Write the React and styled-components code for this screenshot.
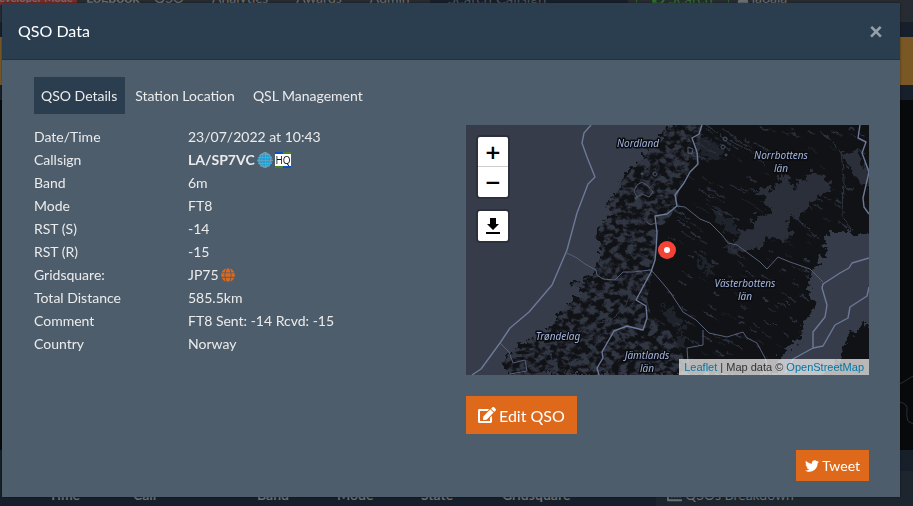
import React, { useState } from "react";
import styled, { createGlobalStyle } from "styled-components";
import { FaChartBar, FaEdit, FaGlobe, FaSyncAlt, FaTwitter, FaUser } from "react-icons/fa";

const GlobalStyle = createGlobalStyle`
  * {
    box-sizing: border-box;
  }
  body {
    margin: 0;
    background: #17202a;
    color: #ebebeb;
    font-family: Lato, "Liberation Sans", sans-serif;
    font-size: 14px;
    line-height: 22px;
  }
  button, input {
    font-family: inherit;
  }
`;

/* ---------- logbook page behind the dialog ---------- */

const Page = styled.div`
  height: 100vh;
  overflow: hidden;
  color: #6b6f74;
`;

const Navbar = styled.nav`
  display: flex;
  align-items: center;
  height: 48px;
  margin-top: -26px;
  background: #262c31;
  white-space: nowrap;

  a {
    color: inherit;
    text-decoration: none;
    margin-right: 28px;
  }
`;

const DevBadge = styled.span`
  width: 77px;
  margin-right: 9px;
  padding-right: 4px;
  background: #7a2b28;
  font-size: 11px;
  font-weight: 700;
  line-height: 14px;
  display: flex;
  justify-content: flex-end;
  overflow: hidden;
`;

const Brand = styled.a`
  width: 40px;
  color: #808488;
  font-weight: 700;
`;

const SearchInput = styled.input`
  width: 198px;
  height: 38px;
  margin-left: -8px;
  margin-right: 8px;
  padding: 0 18px;
  border: 0;
  background: #17202a;
  color: #6b6f74;
  font-size: 15px;

  &::placeholder {
    color: #4b535c;
  }
`;

const SearchButton = styled.button`
  display: flex;
  align-items: center;
  justify-content: center;
  gap: 4px;
  width: 93px;
  height: 38px;
  margin-right: 8px;
  border: 1px solid #2c5a2c;
  background: none;
  color: #2f6b2f;
  font-size: 15px;
`;

const UserName = styled.span`
  display: flex;
  align-items: center;
  gap: 3px;
`;

const Alert = styled.div`
  height: 48px;
  margin: 15px 0;
  background: #7a5826;
`;

const WorldMap = styled.div`
  display: flex;
  justify-content: flex-end;
  height: 350px;
  background: #08090a;
`;

const LogColumns = styled.div`
  display: grid;
  grid-template-columns: 656px 1fr;
  padding-top: 21px;
`;

const LogTable = styled.table`
  width: 600px;
  margin-left: 40px;
  border-collapse: collapse;
  table-layout: fixed;

  th {
    height: 48px;
    padding: 0 9px;
    text-align: left;
  }
`;

const Breakdown = styled.div`
  display: flex;
  align-items: center;
  gap: 3px;
  height: 48px;
  padding-left: 11px;
  background: #1d262f;
`;

/* ---------- dialog ---------- */

const Backdrop = styled.div`
  position: fixed;
  inset: 0;
  padding: 3px 13px 9px 2px;
`;

const Modal = styled.div`
  background: #4e5d6c;
  box-shadow: 0 0 2px rgba(0, 0, 0, 0.5);
`;

const ModalHeader = styled.div`
  display: flex;
  align-items: center;
  justify-content: space-between;
  height: 57px;
  padding: 0 17px 0 16px;
  background: #2b3e50;
  border-bottom: 1px solid #24323f;
`;

const ModalTitle = styled.h5`
  margin: 0;
  color: #fff;
  font-size: 16px;
  font-weight: 400;
`;

const CloseButton = styled.button`
  padding: 0;
  border: 0;
  background: none;
  color: #95a0aa;
  font-size: 24px;
  font-weight: 900;
  line-height: 24px;
`;

const ModalBody = styled.div`
  padding: 17px 31px 16px 32px;
`;

const Tabs = styled.div`
  display: flex;
  gap: 3px;
  margin-bottom: 11px;
`;

const Tab = styled.button`
  height: 37px;
  padding: 0 8px 0 7px;
  border: 0;
  background: ${(props) => (props.$active ? "#2b3e50" : "none")};
  color: #ebebeb;
  font-size: 14px;
`;

const Columns = styled.div`
  display: grid;
  grid-template-columns: 1fr 1fr;
  gap: 29px;
`;

const DetailsTable = styled.table`
  width: 100%;
  height: max-content;
  border-collapse: collapse;

  th,
  td {
    height: 23px;
    padding: 1px 0 0;
    text-align: left;
    font-weight: 400;
  }
  th {
    width: 154px;
  }
`;

const Value = styled.div`
  display: flex;
  align-items: center;
  gap: 2px;

  a {
    display: flex;
    color: #df691a;
  }
`;

const MapBox = styled.div`
  position: relative;
  height: 250px;
  overflow: hidden;
  background: #363c49;

  > svg {
    display: block;
  }
`;

const MapControls = styled.div`
  position: absolute;
  top: 10px;
  left: 10px;
  display: grid;
  gap: 10px;
`;

const MapBar = styled.div`
  width: 34px;
  border: 2px solid rgba(0, 0, 0, 0.2);
  border-radius: 4px;
  overflow: hidden;
`;

const MapButton = styled.button`
  display: flex;
  align-items: center;
  justify-content: center;
  width: 30px;
  height: 30px;
  padding: 0;
  border: 0;
  background: #fff;
  color: #000;
  font-family: "DejaVu Sans", sans-serif;
  font-size: 20px;
  font-weight: 700;
  line-height: 28px;

  &:not(:last-child) {
    border-bottom: 1px solid #ccc;
  }
`;

const Attribution = styled.div`
  position: absolute;
  right: 0;
  bottom: 0;
  padding: 0 5px;
  background: rgba(255, 255, 255, 0.7);
  color: #333;
  font: 11px/16px "Liberation Sans", sans-serif;

  a {
    color: #0078a8;
    text-decoration: none;
  }
`;

const ActionButton = styled.button`
  display: flex;
  align-items: center;
  gap: 3px;
  height: ${(props) => (props.$small ? "31px" : "38px")};
  padding: ${(props) => (props.$small ? "0 9px" : "0 12px")};
  border: 0;
  background: #df691a;
  color: #fff;
  font-size: ${(props) => (props.$small ? "14px" : "16px")};
`;

const Actions = styled.div`
  display: flex;
  justify-content: ${(props) => (props.$right ? "flex-end" : "flex-start")};
  margin-top: ${(props) => (props.$right ? "16px" : "21px")};
`;

const WEST = "M204 0 197 8 190 18 181 28 172 37 167 42 160 52 154 58 150 68 141 78 146 88 135 100 128 112 137 125 132 137 127 150 116 154 104 160 120 164 108 176 94 187 89 198 84 203 77 218 66 213 51 222 37 237 44 250";
const LAND = WEST + "H314L309 238 318 227 331 217 337 200 349 182 342 163 344 150 361 127 358 118 363 108H410V-9H204Z";
const NORWAY = WEST + "H222L215 225 200 200 185 190 181 175 189 135 191 108 206 89 215 60 232 39 236 0Z";

const GREY_AREAS = [
  "M286 65 311 62 314 48 324 56 331 62 347 45 355 50 366 63 347 77 332 92 322 92 324 107 318 118 300 112 295 125H261L270 116 274 105 289 102 289 88 307 90 297 73Z",
  "M376 28 391 27 398 38 403 47V60L394 57 381 42Z",
  "M231 15 245 14 258 22 254 34 236 32Z",
  "M233 133 245 141 249 149 240 148 231 137Z",
  "M258 118 271 119 274 126 264 128Z",
  "M209 210 219 207 219 219 210 222Z",
  "M194 178 204 184 219 198 213 206 202 194Z",
  "M241 78 254 84 268 98 273 112 260 107 250 92Z",
];

const BORDERS = [
  "M125 0 118 8 116 18 121 32 129 52 122 59 111 88 101 125 86 160 63 187 44 203 34 218 15 244 6 250",
  "M236 0 233 9 226 13 231 27 232 39 224 47 218 58 209 70 211 81 201 89 189 91 191 108 190 125 189 135 185 147 170 175 180 181 181 193 177 205 161 201 148 206 136 227 137 233 131 243 133 250",
  "M403 133 386 138 383 143 374 148 357 159 356 163 361 180 359 192 347 207 347 223 327 234 319 248",
  "M403 162 401 171 384 182 382 193 369 200 357 221 347 223",
  "M394 0 392 13 400 17 396 28 403 47 397 73 398 82 403 89",
];

const COUNTIES = [
  "M101 128 111 133 119 139 130 145 131 150 137 154 149 155 157 147 167 147 185 145 194 155 204 167 217 187 230 195 243 208 261 212 277 207 281 213 291 218 299 233 304 250",
  "M34 218 43 227 47 238 59 235 61 246 44 249",
  "M211 81 219 82 234 94 244 98 256 110 262 118 271 120 294 137 301 144 312 132 324 137 344 144 357 157",
  "M237 205 237 220 221 223 222 237",
];

const ROADS = [
  "M240 0 258 12 270 19 289 28 300 42",
  "M353 5 366 16 375 28 378 53 377 92 385 105",
  "M325 90 342 104 353 114",
  "M80 220 98 212 115 207 128 200 148 192 160 180 163 170",
  "M82 222 86 234 78 244",
  "M100 250 108 236 122 230 135 213",
];

// small lakes, all stretched north-west to south-east
const LAKES = Array.from({ length: 260 }, (_, i) => {
  const x = 202 + ((i * 73) % 191);
  const y = 2 + ((i * 137 + i * i * 11) % 241);
  const len = 2 + ((i * 7) % (y < 110 && x < 290 ? 13 : 5));
  return { d: `M${x} ${y}l${len} ${Math.round(len * 0.6)} 2 1`, w: 0.5 + (i % 4) * 0.3 };
});

const LABELS = [
  [172, 22, "Nordland"],
  [315, 34, "Norrbottens"],
  [315, 47, "län"],
  [279, 162, "Västerbottens"],
  [279, 175, "län"],
  [92, 215, "Trøndelag"],
  [181, 234, "Jämtlands"],
  [181, 247, "län"],
];

function MapTiles() {
  return (
    <svg width="100%" height="250" viewBox="0 0 403 250" preserveAspectRatio="xMidYMid slice">
      <defs>
        <filter id="ragged" x="-5%" y="-5%" width="110%" height="110%" colorInterpolationFilters="sRGB">
          <feTurbulence type="fractalNoise" baseFrequency="0.16" numOctaves="3" seed="4" result="n" />
          <feDisplacementMap in="SourceGraphic" in2="n" scale="17" xChannelSelector="R" yChannelSelector="G" />
        </filter>
        <filter id="wobble" x="-10%" y="-10%" width="120%" height="120%" colorInterpolationFilters="sRGB">
          <feTurbulence type="fractalNoise" baseFrequency="0.2" numOctaves="2" seed="9" result="n" />
          <feDisplacementMap in="SourceGraphic" in2="n" scale="4" xChannelSelector="R" yChannelSelector="G" />
        </filter>
        <filter id="fjells" x="0" y="0" width="100%" height="100%" colorInterpolationFilters="sRGB">
          <feTurbulence type="fractalNoise" baseFrequency="0.13 0.17" numOctaves="4" seed="21" />
          <feColorMatrix values="0 0 0 0 0.19  0 0 0 0 0.21  0 0 0 0 0.26  4 3 0 0 -3.1" />
          <feComposite in2="SourceGraphic" operator="in" />
        </filter>
        <clipPath id="land">
          <path d={LAND} />
        </clipPath>
      </defs>
      <rect width="403" height="250" fill="#363c49" />
      <path d={LAND} fill="#111216" filter="url(#ragged)" />
      <path d="M410 195 390 205 381 214 376 232 360 246 352 255H410Z" fill="#111216" filter="url(#ragged)" />
      <path d={NORWAY} fill="#111216" filter="url(#fjells)" clipPath="url(#land)" />
      <g filter="url(#ragged)">
        {GREY_AREAS.map((d, i) => (
          <path key={d} d={d} fill="#2a2f3a" opacity={i > 1 ? 0.6 : 1} />
        ))}
      </g>
      <g fill="none" stroke="#2c323f" strokeLinecap="round" filter="url(#wobble)" clipPath="url(#land)">
        {LAKES.map((lake, i) => (
          <path key={i} d={lake.d} strokeWidth={lake.w} />
        ))}
      </g>
      <g fill="none" stroke="#303745" strokeWidth="1" filter="url(#wobble)">
        {ROADS.map((d) => <path key={d} d={d} />)}
      </g>
      <g fill="none" stroke="#4f586d" strokeWidth="1">
        <path d="M171 60l5-3 6 4 5 6-4 5-7-3-5 3-3-6zM189 47a2 2 0 1 0 .1 0M176 48a1 1 0 1 0 .1 0M170 72a1 1 0 1 0 .1 0M181 97l4 3 4-2M259 12a2 2 0 1 0 .1 0M257 20a2 2 0 1 0 .1 0M260 29a1 1 0 1 0 .1 0M222 22l5 2-1 5-4-1z" />
      </g>
      <g fill="none" stroke="#57617a" strokeWidth="1" strokeLinejoin="round">
        {COUNTIES.map((d) => <path key={d} d={d} />)}
      </g>
      <g fill="none" stroke="#6c7998" strokeWidth="1.4" strokeLinejoin="round">
        {BORDERS.map((d) => <path key={d} d={d} />)}
      </g>
      <g
        fill="#a3b4dd"
        stroke="#0b0c10"
        strokeWidth="3"
        strokeLinejoin="round"
        paintOrder="stroke"
        fontFamily="Noto Sans, sans-serif"
        fontSize="10"
        fontStyle="italic"
        textAnchor="middle"
      >
        {LABELS.map(([x, y, text]) => <text key={x + "-" + y} x={x} y={y}>{text}</text>)}
      </g>
      <circle cx="201" cy="125" r="9" fill="#f44336" />
      <circle cx="201" cy="125" r="3" fill="#fff" />
    </svg>
  );
}

function QrzGlobe() {
  return (
    <svg width="16" height="16" viewBox="0 0 16 16">
      <circle cx="8" cy="8" r="7" fill="#12a0dc" stroke="#3fb4e4" strokeDasharray="1 1" />
      <g fill="none" stroke="#7fa0b2" strokeWidth="0.7">
        <path d="M1 5.5h14M0 8.5h16M1 11.5h14M3 2.5h10M3 14h10M8.5 0v16" />
        <ellipse cx="8" cy="8" rx="3" ry="7.5" />
        <ellipse cx="8" cy="8" rx="5.6" ry="7.5" />
      </g>
    </svg>
  );
}

function HqLogo() {
  return (
    <svg width="16" height="16" viewBox="0 0 16 16">
      <path fill="#fff" d="M0 0h16v16H0z" />
      <path fill="#0b50c8" d="M0 0h8v2H0zM8 14h8v2H8z" />
      <path fill="#4a8028" d="M8 0h8v2H8zM0 14h8v2H0z" />
      <text x="8" y="12" textAnchor="middle" fontFamily="Open Sans, sans-serif" fontSize="10" fill="#111">HQ</text>
    </svg>
  );
}

const rows = [
  ["Date/Time", "23/07/2022 at 10:43"],
  ["Callsign", <><b>LA/SP7VC</b><a href="#qrz" aria-label="QRZ.com"><QrzGlobe /></a><a href="#hamqth" aria-label="HamQTH"><HqLogo /></a></>],
  ["Band", "6m"],
  ["Mode", "FT8"],
  ["RST (S)", "-14"],
  ["RST (R)", "-15"],
  ["Gridsquare:", <>JP75<a href="#grid" aria-label="Show grid"><FaGlobe size={14} /></a></>],
  ["Total Distance", "585.5km"],
  ["Comment", "FT8 Sent: -14 Rcvd: -15"],
  ["Country", "Norway"],
];

const tabs = ["QSO Details", "Station Location", "QSL Management"];

const logHeads = [["Time", 84], ["Call", 124], ["Band", 80], ["Mode", 84], ["State", 81], ["Gridsquare", 147]];

function Logbook() {
  return (
    <Page>
      <Navbar>
        <DevBadge>Developer Mode</DevBadge>
        <Brand href="#home">Logbook</Brand>
        <a href="#qso">QSO</a>
        <a href="#analytics">Analytics</a>
        <a href="#awards">Awards</a>
        <a href="#admin">Admin</a>
        <SearchInput aria-label="Search Callsign" placeholder="Search Callsign" />
        <SearchButton><FaSyncAlt size={13} />Search</SearchButton>
        <UserName><FaUser size={12} />la8aja</UserName>
      </Navbar>
      <Alert />
      <WorldMap>
        <svg width="13" height="350" fill="none" stroke="#2c2f36">
          <path d="M0 284 13 276M0 302q8 2 7 8t1 11l5 3" />
        </svg>
      </WorldMap>
      <LogColumns>
        <LogTable>
          <thead>
            <tr>
              {logHeads.map(([name, width]) => <th key={name} width={width}>{name}</th>)}
            </tr>
          </thead>
        </LogTable>
        <Breakdown><FaChartBar size={15} />QSOs Breakdown</Breakdown>
      </LogColumns>
    </Page>
  );
}

export default function App() {
  const [tab, setTab] = useState(0);
  const [open, setOpen] = useState(true);

  return (
    <>
      <GlobalStyle />
      <Logbook />
      {open && (
        <Backdrop>
          <Modal role="dialog" aria-labelledby="qso-title">
            <ModalHeader>
              <ModalTitle id="qso-title">QSO Data</ModalTitle>
              <CloseButton aria-label="Close" onClick={() => setOpen(false)}>×</CloseButton>
            </ModalHeader>
            <ModalBody>
              <Tabs role="tablist">
                {tabs.map((name, i) => (
                  <Tab key={name} role="tab" aria-selected={tab === i} $active={tab === i} onClick={() => setTab(i)}>
                    {name}
                  </Tab>
                ))}
              </Tabs>
              {tab === 0 && (
                <Columns>
                  <DetailsTable>
                    <tbody>
                      {rows.map(([label, value]) => (
                        <tr key={label}>
                          <th scope="row">{label}</th>
                          <td><Value>{value}</Value></td>
                        </tr>
                      ))}
                    </tbody>
                  </DetailsTable>
                  <div>
                    <MapBox>
                      <MapTiles />
                      <MapControls>
                        <MapBar>
                          <MapButton aria-label="Zoom in">+</MapButton>
                          <MapButton aria-label="Zoom out">−</MapButton>
                        </MapBar>
                        <MapBar>
                          <MapButton aria-label="Download map">
                            <svg width="14" height="16" viewBox="0 0 14 16">
                              <path d="M4 0h6v6h3L7 12 1 6h3zM0 14h14v2H0z" />
                            </svg>
                          </MapButton>
                        </MapBar>
                      </MapControls>
                      <Attribution>
                        <a href="#leaflet">Leaflet</a> | Map data © <a href="#osm">OpenStreetMap</a>
                      </Attribution>
                    </MapBox>
                    <Actions>
                      <ActionButton><FaEdit size={18} />Edit QSO</ActionButton>
                    </Actions>
                    <Actions $right>
                      <ActionButton $small><FaTwitter size={14} />Tweet</ActionButton>
                    </Actions>
                  </div>
                </Columns>
              )}
            </ModalBody>
          </Modal>
        </Backdrop>
      )}
    </>
  );
}
